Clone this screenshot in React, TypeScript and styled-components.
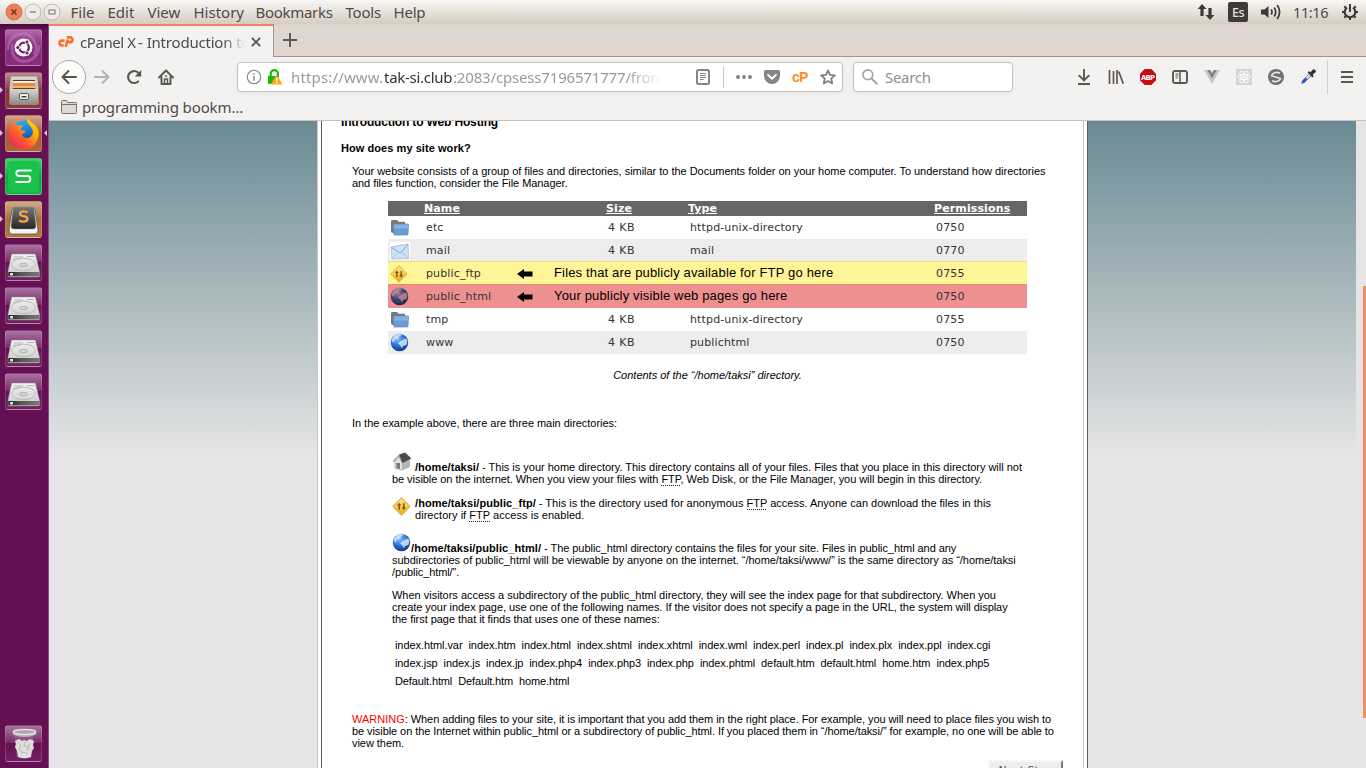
import React from "react";
import styled, { createGlobalStyle, css } from "styled-components";

const GlobalStyle = createGlobalStyle`
  *, *::before, *::after { box-sizing: border-box; }
  html, body { margin: 0; padding: 0; overflow: hidden; }
  svg { display: block; flex: none; }
`;

const uiFont = css`
  font-family: "Noto Sans", "Open Sans", sans-serif;
`;

const Desktop = styled.div`
  width: 1366px;
  height: 768px;
  display: flex;
  flex-direction: column;
  overflow: hidden;
  background: #fff;
`;

/* ---------- top panel ---------- */

const Panel = styled.header`
  ${uiFont}
  height: 24px;
  flex: none;
  display: flex;
  align-items: center;
  padding: 0 7px 0 4.5px;
  background: linear-gradient(#f9f8f6 0%, #f1eeea 20%, #d8cec4 95%, #d6ccc2 100%);
  color: #4c4b47;
`;

const WindowButtons = styled.div`
  display: flex;
  gap: 1px;
  width: 66px;
`;

const Menus = styled.nav`
  display: flex;
  gap: 12px;
`;

const Label = styled.span<{ $w: number; $ls?: number }>`
  display: block;
  width: ${(p) => p.$w}px;
  letter-spacing: ${(p) => p.$ls ?? 0}px;
  font-size: 15px;
  line-height: 20px;
  white-space: nowrap;
`;

const Indicators = styled.div`
  margin-left: auto;
  display: flex;
  align-items: center;
`;

const Layout = styled.div`
  width: 20px;
  height: 20px;
  margin: 0 13px 0 13px;
  border-radius: 2px;
  background: #3c3b37;
  color: #e6e1db;
  font-size: 12.5px;
  font-weight: 500;
  line-height: 21px;
  letter-spacing: -0.6px;
  text-align: center;
`;

const Clock = styled.div`
  width: 37px;
  margin: 0 11px 0 12px;
  font-size: 14.5px;
  line-height: 20px;
  letter-spacing: -0.4px;
  white-space: nowrap;
`;

/* ---------- launcher ---------- */

const Main = styled.div`
  flex: 1;
  min-height: 0;
  display: flex;
`;

const Launcher = styled.aside`
  width: 49px;
  flex: none;
  display: flex;
  flex-direction: column;
  gap: 6px;
  padding: 5px 0 6px 5px;
  border-right: 1px solid #8b4c85;
  background: linear-gradient(#44093c 0, #641052 6px, #641052 100%);
`;

const Tile = styled.div<{ $bg: string; $last?: boolean }>`
  position: relative;
  width: 37px;
  height: 37px;
  flex: none;
  display: flex;
  align-items: center;
  justify-content: center;
  border-radius: 3px;
  border: 1px solid rgba(255, 255, 255, 0.16);
  background: ${(p) => p.$bg};
  margin-top: ${(p) => (p.$last ? "auto" : "0")};
`;

const Pip = styled.i<{ $right?: boolean }>`
  position: absolute;
  top: 14px;
  ${(p) => (p.$right ? "right: -6px; border-right: 3px solid #d6c4d2;" : "left: -6px; border-left: 3px solid #d6c4d2;")}
  border-top: 3px solid transparent;
  border-bottom: 3px solid transparent;
`;

/* ---------- browser chrome ---------- */

const Browser = styled.main`
  flex: 1;
  min-width: 0;
  display: flex;
  flex-direction: column;
`;

const TabStrip = styled.div`
  ${uiFont}
  height: 33px;
  flex: none;
  display: flex;
  background: linear-gradient(#d6ccc2 0, #dfd6d0 1px);
`;

const Tab = styled.div`
  width: 225px;
  display: flex;
  align-items: center;
  padding: 0 0 0 9px;
  border-top: 2px solid #ee8560;
  border-right: 1px solid #a09790;
  background: #f4f2f1;
  color: #4c4b4a;
`;

const TabTitle = styled.div`
  display: flex;
  gap: 4px;
  width: 165px;
  margin: 0 6px 0 6px;
  overflow: hidden;
  font-size: 15px;
  line-height: 20px;
  letter-spacing: -0.2px;
  white-space: nowrap;
  mask-image: linear-gradient(to right, #000 143px, transparent 165px);
`;

const SiteName = styled.span`
  width: 54px;
  letter-spacing: -0.42px;
`;

const StripRest = styled.div`
  flex: 1;
  padding: 9px 0 0 9px;
  border-bottom: 1px solid #a0948d;
`;

const Toolbar = styled.div`
  ${uiFont}
  height: 40px;
  flex: none;
  display: flex;
  align-items: center;
  background: #f4f2f1;
`;

const RoundButton = styled.div`
  width: 34px;
  height: 34px;
  margin-left: 3px;
  display: grid;
  place-items: center;
  border: 1px solid #aaa8a6;
  border-radius: 50%;
  background: #fcfcfb;
`;

const ToolButton = styled.div`
  width: 32px;
  height: 32px;
  flex: none;
  display: grid;
  place-items: center;
`;

const NavIcons = styled.div`
  display: flex;
  width: 151px;
`;

const Field = styled.div<{ $w: number; $after?: number }>`
  width: ${(p) => p.$w}px;
  height: 30px;
  flex: none;
  display: flex;
  align-items: center;
  margin-right: ${(p) => p.$after ?? 0}px;
  padding-left: 8px;
  border: 1px solid #c5c2bf;
  border-radius: 4px;
  background: #fff;
  box-shadow: 0 1px 4px rgba(0, 0, 0, 0.06);
  font-size: 15px;
  color: #8f8f8f;
`;

const Identity = styled.div`
  display: flex;
  gap: 5px;
`;

const Address = styled.div`
  display: flex;
  width: 374px;
  margin: 0 31px 0 8px;
  overflow: hidden;
  color: #9a9a9a;
  white-space: nowrap;
  mask-image: linear-gradient(to right, #000 335px, transparent 371px);
`;

const Part = styled.span<{ $w: number; $ls: number; $strong?: boolean }>`
  width: ${(p) => p.$w}px;
  flex: none;
  letter-spacing: ${(p) => p.$ls}px;
  line-height: 20px;
  color: ${(p) => (p.$strong ? "#333" : "inherit")};
`;

const SearchHint = styled.span`
  margin-left: 7px;
  letter-spacing: -0.3px;
`;

const FieldRule = styled.div`
  width: 1px;
  height: 22px;
  margin: 0 12px 0 13px;
  background: #c9c9c9;
`;

const PageActions = styled.div`
  display: flex;
  align-items: center;
  gap: 12px;
`;

const Extensions = styled.div`
  display: flex;
  margin-left: auto;
  width: 298px;
  align-items: center;
`;

const ToolbarRule = styled.div`
  width: 1px;
  height: 34px;
  margin: 0 3px 0 3px;
  background: #d2d0ce;
`;

const BookmarksBar = styled.div`
  ${uiFont}
  height: 24px;
  flex: none;
  display: flex;
  align-items: center;
  gap: 5px;
  padding: 0 0 3px 12px;
  border-bottom: 1px solid #c5c2bf;
  background: #f4f2f1;
  color: #4c4b4a;
`;

/* ---------- page ---------- */

const Viewport = styled.section`
  flex: 1;
  min-height: 0;
  display: flex;
  overflow: hidden;
`;

const Backdrop = styled.div`
  flex: 1;
  display: flex;
  padding-left: 268px;
  background: linear-gradient(#6a8a93 0, #e5e5e5 335px);
`;

const ScrollTrack = styled.div`
  width: 10px;
  display: flex;
  justify-content: flex-end;
  padding-top: 165px;
  background: #e5e5e5;
`;

const ScrollThumb = styled.div`
  width: 3px;
  height: 432px;
  background: #f08b67;
`;

const OuterFrame = styled.div`
  width: 771px;
  padding: 0 3px;
  border-left: 1px solid #c8c8c8;
  border-right: 1px solid #5e5e5e;
  background: #fff;
`;

const Sheet = styled.div`
  display: flow-root;
  width: 763px;
  height: 100%;
  padding-left: 19px;
  border-left: 1px solid #5e5e5e;
  border-right: 1px solid #c8c8c8;
  font: 11px/12px "Liberation Sans", Arial, sans-serif;
  color: #000;
  white-space: nowrap;
`;

const Heading = styled.h2<{ $top: number; $size: number; $ls: number }>`
  margin: ${(p) => p.$top}px 0 0;
  font-size: ${(p) => p.$size}px;
  line-height: 12px;
  font-weight: bold;
  letter-spacing: ${(p) => p.$ls}px;
`;

const Copy = styled.p<{ $top: number; $indent?: number }>`
  margin: ${(p) => p.$top}px 0 0 ${(p) => p.$indent ?? 11}px;
`;

const Line = styled.span<{ $ls: number }>`
  letter-spacing: ${(p) => p.$ls}px;
`;

const Path = styled.b<{ $ls: number }>`
  letter-spacing: ${(p) => p.$ls}px;
`;

const Caption = styled.p`
  width: 639px;
  margin: 15px 0 0 47px;
  text-align: center;
  font-style: italic;
`;

const Abbr = styled.abbr`
  text-decoration: none;
  background: repeating-linear-gradient(to right, #222 0 1px, transparent 1px 2px) 0 100% / 100% 1px no-repeat;
  padding-bottom: 1px;
`;

const InlineIcon = styled.span<{ $gap: number }>`
  display: inline-block;
  margin: -20px ${(p) => p.$gap}px 0 0;
  vertical-align: baseline;
`;

const FtpRow = styled.div`
  display: flex;
  gap: 4px;
  margin: 12px 0 0 51px;
`;

const Listing = styled.div`
  width: 639px;
  margin: 12px 0 0 47px;
  font-family: "DejaVu Sans", sans-serif;
  font-size: 11px;
  color: #333;
`;

const ListingHead = styled.div`
  display: grid;
  grid-template-columns: 36px 182px 82px 246px 1fr;
  height: 15px;
  line-height: 15px;
  background: #666;
  color: #fff;
  font-weight: bold;
  text-decoration: underline;
  letter-spacing: 0.12px;
`;

const ListingRow = styled.div<{ $bg: string; $h: number; $edge?: string; $drop?: number }>`
  display: grid;
  grid-template-columns: 2px 36px 182px 82px 246px 1fr;
  align-items: center;
  height: ${(p) => p.$h}px;
  padding-top: ${(p) => p.$drop ?? 0}px;
  background: ${(p) => p.$bg};
  box-shadow: ${(p) => (p.$edge ? `inset 0 1px ${p.$edge}` : "none")};
  letter-spacing: 0.14px;
`;

const NoteRow = styled(ListingRow)`
  grid-template-columns: 2px 36px 91px 37px 382px 1fr;
`;

const Size = styled.span`
  letter-spacing: 0.4px;
`;

const Note = styled.span`
  margin-bottom: 2px;
  font: 13px/14px "Liberation Sans", Arial, sans-serif;
  letter-spacing: 0.16px;
  color: #000;
`;

const IndexNames = styled.div`
  margin: 11px 0 0 54px;
  line-height: 18px;
`;

const IndexRow = styled.div<{ $ls: number }>`
  display: flex;
  gap: 6px;
  letter-spacing: ${(p) => p.$ls}px;
`;

const Warn = styled.span`
  color: #f00;
`;

const NextButton = styled.button`
  display: block;
  width: 75px;
  margin: 11px 0 0 647px;
  padding: 3px 0;
  border: 2px solid;
  border-color: #f6f6f6 #7c7c7c #7c7c7c #f6f6f6;
  background: #ededed;
  font: 11px/12px "DejaVu Sans", sans-serif;
  color: #555;
`;

/* ---------- icons ---------- */

const WinButton = ({ kind }: { kind: "close" | "min" | "max" }) => (
  <svg width="18" height="18" viewBox="0 0 18 18" fill="none">
    <circle cx="9" cy="9" r="8" fill={kind === "close" ? "#ef7f56" : "#efebe6"} stroke={kind === "close" ? "#cf7452" : "#c3bab2"} />
    {kind === "close" && <path d="M6.5 6.5l5 5M11.5 6.5l-5 5" stroke="#5a3325" strokeWidth="1.4" />}
    {kind === "min" && <path d="M6 9h6" stroke="#77726c" strokeWidth="1.2" />}
    {kind === "max" && <rect x="6" y="7" width="6" height="4" stroke="#77726c" />}
  </svg>
);

const NetworkIcon = () => (
  <svg width="18" height="18" viewBox="0 0 18 18" fill="#3c3b37">
    <path d="M5 1l4.500 5H6.600v7H3.400V6H.800zM13 17l-4.500-5h2.900V5h3.200v7h2.800z" />
  </svg>
);

const SoundIcon = () => (
  <svg width="20" height="18" viewBox="0 0 20 18" fill="none" stroke="#3c3b37">
    <path d="M0 6.500h3.500L7.500 3v12l-4-3.500H0z" fill="#3c3b37" stroke="none" />
    <path d="M10.200 6.500q1.500 2.500 0 5M13.200 4.500q3 4.500 0 9M16.200 2q4.800 7 0 14" strokeWidth="1.700" />
  </svg>
);

const SessionIcon = () => (
  <svg width="18" height="18" viewBox="0 0 18 18" fill="none" stroke="#3c3b37">
    <path d="M6 4.600a5.300 5.300 0 1 0 6 0" strokeWidth="2.200" />
    <path d="M9 1v8" strokeWidth="2" />
    <path d="M3.500 9H1M17 9h-2.500M5.200 12.800L3.300 14.700M12.800 12.800l1.900 1.900M9 14.500V17M4.800 4.800L3.300 3.300M13.200 4.800l1.500-1.500" strokeWidth="2" />
  </svg>
);

const DashIcon = () => (
  <svg width="35" height="35" viewBox="0 0 35 35" fill="none">
    <path d="M2 20C1 8 13 1 22 5c8 4 10 14 6 20M33 15c1 10-8 18-18 16C8 29 4 22 7 14" stroke="#c58abd" strokeOpacity=".45" strokeWidth="3" />
    <circle cx="17.500" cy="17.500" r="9" fill="#fff" />
    <circle cx="18" cy="17.500" r="4.800" stroke="#6d1f61" strokeWidth="2.300" />
    <path d="M18 17.500H9M18 17.500l4.500-8M18 17.500l4.500 8" stroke="#fff" strokeWidth="1.200" />
    <circle cx="18" cy="17.500" r="3.200" fill="#fff" />
    <g fill="#6d1f61" stroke="#fff" strokeWidth=".8"><circle cx="11.800" cy="17.500" r="2" /><circle cx="21" cy="12" r="2" /><circle cx="21" cy="23" r="2" /></g>
  </svg>
);

const FilesIcon = () => (
  <svg width="30" height="31" viewBox="0 0 30 31">
    <defs><linearGradient id="cab" x2="0" y2="1"><stop stopColor="#d9d7d3" /><stop offset="1" stopColor="#8d8b88" /></linearGradient></defs>
    <path d="M2.500 2h25L29 12v17H1V12z" fill="url(#cab)" stroke="#e9e6e2" strokeWidth=".7" />
    <path d="M4 5h22v10H4z" fill="#5a3a2a" />
    <path d="M4 6h22v2H4z" fill="#f3ece2" /><path d="M4 8h22v5H4z" fill="#ea8a3c" /><path d="M3 11.500h24v1H3z" fill="#f7dcae" />
    <path d="M1 14h28v15H1z" fill="url(#cab)" />
    <rect x="10.500" y="18.500" width="9" height="6" rx="1" fill="#eee" stroke="#555" /><path d="M12.500 21h5v1.500h-5z" fill="#444" />
  </svg>
);

const FirefoxIcon = () => (
  <svg width="32" height="32" viewBox="0 0 32 32">
    <defs>
      <linearGradient id="fox" x1="1" x2=".1" y2="1"><stop stopColor="#ffe600" /><stop offset=".35" stopColor="#ffb010" /><stop offset=".65" stopColor="#ff5a2d" /><stop offset="1" stopColor="#e8186c" /></linearGradient>
      <linearGradient id="orb" x2=".3" y2="1"><stop stopColor="#1fc0ff" /><stop offset="1" stopColor="#1c3f9d" /></linearGradient>
    </defs>
    <circle cx="16.500" cy="15" r="12.500" fill="url(#orb)" />
    <path d="M3 8c1-2 2-3 3-4 0 2 .500 3 1.500 3.500C9 7 11 7 12 7.500c2-.500 3 0 3.500 0C13 9 12.500 11 13 12c2 1 4 0 4.500 1.500-.5 1.500-2.500 1.500-3.500 3 0 3 5 5 9 2 2-2 2.500-5 1-8C22.500 8 20 6 19 4c0-2 0-3 1-4 1 3 4 4 6 6 1.500 1.500 2 2 2.500 3C31 12 31.500 16 30 20c-2 7-7 11-14 11.500C8 31 2 26 1 18.500.500 14 1.500 10 3 8z" fill="url(#fox)" />
  </svg>
);

const WpsIcon = () => (
  <svg width="37" height="37" viewBox="0 0 37 37">
    <rect x="3" y="3" width="31" height="31" rx="4" fill="#18c24b" />
    <path d="M26.500 12.500H14c-3.500 0-3.500 5.500 0 5.500h8.500c3.800 0 3.800 6 0 6H10.500" fill="none" stroke="#fff" strokeWidth="1.900" />
  </svg>
);

const SublimeIcon = () => (
  <svg width="33" height="33" viewBox="0 0 33 33">
    <defs><linearGradient id="key" x2="0" y2="1"><stop stopColor="#777" /><stop offset="1" stopColor="#252525" /></linearGradient></defs>
    <path d="M5 6L2 27q0 4 3 4h23q3 0 3-4L28 6z" fill="#f4f4f4" stroke="#555" strokeWidth=".8" />
    <path d="M6 4h21l2 19q0 3-3 3H7q-3 0-3-3z" fill="url(#key)" stroke="#999" strokeWidth=".5" />
    <path d="M20.500 9.500c-3-2-7.500-1.300-7.500 1.300 0 3.700 7.500 1.200 7.500 5 0 3.200-5.500 3.500-8.500 1.700" fill="none" stroke="#f5a04a" strokeWidth="2.400" />
  </svg>
);

const DiskIcon = () => (
  <svg width="35" height="35" viewBox="0 0 35 35">
    <defs><linearGradient id="disk" x2="0" y2="1"><stop stopColor="#f2f2f2" /><stop offset="1" stopColor="#c9c9c9" /></linearGradient>
    <linearGradient id="diskedge"><stop stopColor="#222" /><stop offset=".4" stopColor="#555" /><stop offset="1" stopColor="#777" /></linearGradient></defs>
    <path d="M6.500 9h22q.700 0 1 .700L33.500 26v5q0 1-1 1H3q-1 0-1-1v-5L5.500 9.700Q5.800 9 6.500 9z" fill="url(#disk)" stroke="#8e8e8e" strokeWidth=".5" />
    <path d="M2.300 27h31v4.300H2.300z" fill="url(#diskedge)" /><path d="M4 28h3v2.500H4z" fill="#ddd" />
    <ellipse cx="17.500" cy="19.500" rx="12" ry="6.300" fill="none" stroke="#bdbdbd" /><ellipse cx="17.500" cy="20" rx="4" ry="1.600" fill="#d5d5d5" stroke="#a7a7a7" strokeWidth=".8" />
    <path d="M8 12h9M21 11.500h7M7 14.500l8-1" stroke="#b5b5b5" fill="none" />
  </svg>
);

const TrashIcon = () => (
  <svg width="35" height="35" viewBox="0 0 35 35">
    <path d="M8 8l2.500 23q7 3 14 0L28 8z" fill="#b9a4b6" fillOpacity=".22" />
    <path d="M9 15l4-2 3 2 2-1 3 1 3-2 4 2-1 4 1 3-2 3-1 6q-6 2.500-13 0l-1-6-2-4 1-3z" fill="#dededc" />
    <path d="M12 17l3 3-2 3 3 3M19 16l-1 4 4 1-1 4M24 17l-2 4 3 3M15 27l3-1 4 2" stroke="#bbbab8" fill="none" />
    <path d="M7 6.500v2q11.500 5 23 0v-2z" fill="#b9b9b4" />
    <ellipse cx="18.500" cy="6" rx="11.300" ry="2.500" fill="#b49eb0" stroke="#e0e0dc" strokeWidth="1.500" />
  </svg>
);

const CpLogo = () => (
  <svg width="16" height="11" viewBox="0 0 16 11" fill="none" stroke="#ff6c2c" strokeWidth="2.600">
    <path d="M6.700 4.600H4a2.400 2.400 0 0 0 0 4.900h1.700M7.700 11l1.900-7.500M8.800 1.400h3.400a2.300 2.300 0 0 1 0 4.700h-2" />
  </svg>
);

const CrossIcon = () => (
  <svg width="10" height="10" viewBox="0 0 10 10" stroke="#555" strokeWidth="1.700"><path d="M.800.800l8.400 8.400M9.200.800L.800 9.200" /></svg>
);

const PlusIcon = () => (
  <svg width="14" height="14" viewBox="0 0 14 14" stroke="#5b5855" strokeWidth="1.900"><path d="M7 0v14M0 7h14" /></svg>
);

const ArrowIcon = ({ back }: { back?: boolean }) => (
  <svg width="16" height="16" viewBox="0 0 16 16" fill="none" stroke={back ? "#55534f" : "#b5b3b1"} strokeWidth="2" strokeLinecap="round" strokeLinejoin="round">
    {back ? <path d="M15 8H1.500M7.500 2L1.500 8l6 6" /> : <path d="M1 8h13.500M8.500 2l6 6-6 6" />}
  </svg>
);

const ReloadIcon = () => (
  <svg width="16" height="16" viewBox="0 0 16 16" fill="none" stroke="#5a5855" strokeWidth="2.100">
    <path d="M12.800 11.800A6 6 0 1 1 12 3.500l1.500 1.800" /><path d="M15.200 1v6.500H8.800z" fill="#5a5855" stroke="none" />
  </svg>
);

const HomeIcon = () => (
  <svg width="16" height="16" viewBox="0 0 16 16" fill="none" stroke="#5a5855" strokeWidth="2" strokeLinejoin="round" strokeLinecap="round">
    <path d="M1 8.500L8 1.500l7 7M3.500 8v7h9V8" /><path d="M6.500 15v-5h3v5" strokeWidth="1.500" /><path d="M7.500 7h1" strokeWidth="1.500" />
  </svg>
);

const InfoIcon = () => (
  <svg width="16" height="16" viewBox="0 0 16 16" fill="none" stroke="#858585">
    <circle cx="8" cy="8" r="6.700" strokeWidth="1.100" /><path d="M8 7v4.700M8 4.200v1.600" strokeWidth="1.500" />
  </svg>
);

const LockIcon = () => (
  <svg width="16" height="16" viewBox="0 0 16 16">
    <path d="M3.700 8V4.800a3.600 3.600 0 0 1 7.200 0V8" fill="none" stroke="#12bc00" strokeWidth="2.200" />
    <path d="M1 7h9l-4 8H2q-1 0-1-1z" fill="#12bc00" />
    <path d="M9.500 6.300L14.800 15H4.500z" fill="#ffa61c" stroke="#ffa61c" strokeWidth="1" strokeLinejoin="round" /><path d="M9.700 9v3M9.700 13v1.300" stroke="#fff" strokeWidth="1.400" />
  </svg>
);

const ReaderIcon = () => (
  <svg width="14" height="16" viewBox="0 0 14 16" fill="none" stroke="#858585">
    <rect x="1" y="1" width="12" height="14" rx="1.500" strokeWidth="2" /><path d="M4 4.500h6M4 6.500h6M4 8.500h6M4 10.500h3.500" />
  </svg>
);

const DotsIcon = () => (
  <svg width="16" height="16" viewBox="0 0 16 16" fill="#858585"><circle cx="2" cy="8" r="2" /><circle cx="8" cy="8" r="2" /><circle cx="14" cy="8" r="2" /></svg>
);

const PocketIcon = () => (
  <svg width="16" height="16" viewBox="0 0 16 16" fill="none">
    <path d="M1.500 1h13Q16 1 16 2.500V7A8 8 0 0 1 0 7V2.500Q0 1 1.500 1z" fill="#858585" /><path d="M4.200 6L8 9.700 11.800 6" stroke="#fff" strokeWidth="2" strokeLinecap="round" strokeLinejoin="round" />
  </svg>
);

const CpAction = styled.span`
  width: 16px;
  font: bold 14px/16px "Liberation Sans", sans-serif;
  letter-spacing: -0.8px;
  color: #ff8d1e;
`;

const StarIcon = () => (
  <svg width="16" height="16" viewBox="0 0 16 16" fill="none" stroke="#7d7d7d" strokeWidth="1.700" strokeLinejoin="round">
    <path d="M8 1.300l2 4.500 4.900.500-3.700 3.300 1.100 4.900L8 12l-4.300 2.500 1.100-4.900L1.100 6.300 6 5.800z" />
  </svg>
);

const MagnifierIcon = () => (
  <svg width="16" height="16" viewBox="0 0 16 16" fill="none" stroke="#a4a4a4"><circle cx="5.800" cy="5.800" r="4.900" strokeWidth="1.700" /><path d="M9.500 9.500l5.800 5.800" strokeWidth="2" /></svg>
);

const DownloadIcon = () => (
  <svg width="16" height="16" viewBox="0 0 16 16" fill="none" stroke="#5a5855" strokeWidth="1.900"><path d="M8 0v11M2.700 6.200L8 11.500l5.300-5.300M2 15h12" /></svg>
);

const LibraryIcon = () => (
  <svg width="16" height="16" viewBox="0 0 16 16" fill="none" stroke="#5a5855" strokeWidth="1.800"><path d="M1.500 1v14M5.500 2v13M9 1v14M10.700 2.500l4.600 12.300" strokeWidth="1.700" /></svg>
);

const AbpIcon = () => (
  <svg width="18" height="18" viewBox="0 0 18 18">
    <path d="M5.700 1h6.600L17 5.700v6.600L12.300 17H5.700L1 12.300V5.700z" fill="#c70d12" />
    <text x="9" y="11.700" fill="#fff" textAnchor="middle" fontFamily="DejaVu Sans" fontWeight="bold" fontSize="6.800" textLength="14">ABP</text>
  </svg>
);

const SidebarIcon = () => (
  <svg width="16" height="16" viewBox="0 0 16 16" fill="none" stroke="#5a5855">
    <rect x="1" y="2" width="14" height="12" rx="2" strokeWidth="1.900" /><path d="M8 2v12" strokeWidth="1.500" /><path d="M3.500 5h3M3.500 7h3M3.500 9h2" />
  </svg>
);

const VueIcon = () => (
  <svg width="16" height="14" viewBox="0 0 16 14"><path d="M0 0h16L8 14z" fill="#c6c6c6" /><path d="M3.200 0h9.600L8 8.500z" fill="#858585" /><path d="M6.200 0h3.600L8 3z" fill="#e8e8e8" /></svg>
);

const ReactIcon = () => (
  <svg width="16" height="16" viewBox="0 0 16 16" fill="none">
    <path fill="#d5d5d5" d="M0 0h16v16H0z" />
    <g stroke="#fbfbfb" strokeWidth="1"><ellipse cx="8" cy="8" rx="6.500" ry="2.500" /><ellipse cx="8" cy="8" rx="6.500" ry="2.500" transform="rotate(60 8 8)" /><ellipse cx="8" cy="8" rx="6.500" ry="2.500" transform="rotate(120 8 8)" /></g>
    <circle cx="8" cy="8" r="1.300" fill="#fff" />
  </svg>
);

const BlockIcon = () => (
  <svg width="16" height="16" viewBox="0 0 16 16" fill="none"><circle cx="8" cy="8" r="8" fill="#707070" /><path d="M12 4.200c-2.500-1.500-6.500-1-8.300 1.800M4 11.800c2.500 1.500 6.500 1 8.300-1.800M2.800 6.500l10.500 3.300" stroke="#e8e8e8" strokeWidth="1.600" /></svg>
);

const DropperIcon = () => (
  <svg width="16" height="16" viewBox="0 0 16 16" fill="none">
    <path d="M9.500 4.500L3 11l-1.500 3.500L5 13l6.500-6.500z" fill="#ccd6ee" stroke="#777" strokeWidth=".8" /><path d="M6.500 9.500l-4 4" stroke="#2a55d8" strokeWidth="2.500" />
    <path d="M7.500 3.300l1.500-1 1.500 1L12.500.800Q14-.300 15.300 1q1.200 1.300 0 2.600l-2.500 2 .8 1.800-1.300 1.200z" fill="#353538" />
  </svg>
);

const BurgerIcon = () => (
  <svg width="12" height="12" viewBox="0 0 12 12" stroke="#5a5855" strokeWidth="1.800"><path d="M0 1h12M0 6h12M0 11h12" /></svg>
);

const BookmarkFolder = () => (
  <svg width="16" height="14" viewBox="0 0 16 14" fill="#dcdad8" stroke="#77736f">
    <path d="M.500 12.500v-11q0-1 1-1h4l1.500 2h7.500q1 0 1 1v9q0 1-1 1h-13q-1 0-1-1z" /><path d="M.500 4.500h15" />
  </svg>
);

const FolderIcon = () => (
  <svg width="20" height="18" viewBox="0 0 20 18">
    <path d="M1 2.500Q1 1 2 1h5l1.500 1.800H15V14H3q-2 0-2-2z" fill="#747a80" />
    <path d="M3.500 5h15l-.5 10.500-1 .500H4z" fill="#6b9bd0" stroke="#5b89be" strokeWidth=".7" /><path d="M4 5.500h14v4H4z" fill="#86b0de" />
  </svg>
);

const MailIcon = () => (
  <svg width="20" height="20" viewBox="0 0 20 20">
    <path d="M0 1h20v18H0z" fill="#fff" />
    <path d="M1 6l17-3 .500 14.500L2 18z" fill="#cfe3f5" stroke="#9dbbd9" strokeWidth=".8" /><path d="M1.500 6.500l9 5.500L18 3.500" fill="none" stroke="#7fa6cd" /><path d="M2 17.500l6-6.500M18 17l-6-6" fill="none" stroke="#a9c5e2" />
  </svg>
);

const FtpIcon = ({ size = 19 }: { size?: number }) => (
  <svg width={size} height={size} viewBox="0 0 18 18">
    <defs><linearGradient id="sign" x2="0" y2="1"><stop stopColor="#ffe98a" /><stop offset="1" stopColor="#e9ac10" /></linearGradient></defs>
    <path d="M9 .800L17.200 9 9 17.200.800 9z" fill="url(#sign)" stroke="#dfb040" strokeLinejoin="round" />
    <path d="M6.800 12V7M11.200 6v5" stroke="#7a5510" strokeWidth="1.400" /><path d="M4.800 8L6.800 5.500 8.800 8zM9.200 10l2 2.500 2-2.500z" fill="#7a5510" />
  </svg>
);

const GlobeIcon = ({ dim }: { dim?: boolean }) => {
  const id = dim ? "globeDim" : "globe";
  return (
    <svg width="19" height="19" viewBox="0 0 19 19">
      <defs><radialGradient id={id} cx=".4" cy=".3" r=".75"><stop stopColor={dim ? "#9a86a8" : "#8cc0ff"} /><stop offset=".5" stopColor={dim ? "#3f4370" : "#2f74d8"} /><stop offset="1" stopColor={dim ? "#1b1f45" : "#0d2f85"} /></radialGradient></defs>
      <circle cx="9.500" cy="9.500" r="8.700" fill={`url(#${id})`} />
      <path d="M2 6q2-4 6-5 3 0 4 1l-3 1.500-1 2-3 1-1 2-1 1.500q-1.500-1.500-1-4zM10 8.500l2-1 3-2 2 1q1 3-.5 5.500l-3.500 1-1 2.500-2-3.500-2-1.500z" fill={dim ? "#c78a98" : "#dcedfb"} fillOpacity=".8" />
    </svg>
  );
};

const HouseIcon = () => (
  <svg width="20" height="19" viewBox="0 0 20 19">
    <path d="M3 9l6-6 8 4v8l-7 3-7-1.500z" fill="#e3e3e3" stroke="#999" strokeWidth=".7" /><path d="M10 10v8l8-3.500V8z" fill="#b5b5b5" />
    <path d="M.500 9L7 2.500 10.500 10 10 11 6.500 5 1.500 10z" fill="#a8a8a8" /><path d="M7 2.500L13 .500 19.500 6.500 10.500 11z" fill="#4b4b4b" /><path d="M4.500 11h3.500v6L4.500 16z" fill="#777" />
  </svg>
);

const PointerArrow = () => (
  <svg width="16" height="12" viewBox="0 0 16 12"><path d="M0 6l7-5v2.500h8.500v5H7V11z" fill="#000" /></svg>
);

/* ---------- data ---------- */

const menus: [string, number, number][] = [
  ["File", 25, 0], ["Edit", 28, 0], ["View", 34, 0], ["History", 50, 0], ["Bookmarks", 78, -0.3], ["Tools", 36, -0.2], ["Help", 32, -0.2],
];

const indexNames: [string, number][] = [
  ["index.html.var index.htm index.html index.shtml index.xhtml index.wml index.perl index.pl index.plx index.ppl index.cgi", -0.07],
  ["index.jsp index.js index.jp index.php4 index.php3 index.php index.phtml default.htm default.html home.htm index.php5", -0.095],
  ["Default.html Default.htm home.html", -0.125],
];

const glass = "linear-gradient(#a9729f 0%, #7a2b6b 48%, #641052 50%, #712260 100%)";

type PlainRowProps = { icon: React.ReactNode; name: string; type: string; perm: string; bg: string; h: number; drop?: number };

const PlainRow = ({ icon, name, type, perm, bg, h, drop }: PlainRowProps) => (
  <ListingRow $bg={bg} $h={h} $drop={drop}>
    <span />{icon}<span>{name}</span><Size>4 KB</Size><span>{type}</span><span>{perm}</span>
  </ListingRow>
);

export default function App() {
  return (
    <Desktop>
      <GlobalStyle />
      <Panel>
        <WindowButtons><WinButton kind="close" /><WinButton kind="min" /><WinButton kind="max" /></WindowButtons>
        <Menus>{menus.map(([t, w, ls]) => <Label key={t} $w={w} $ls={ls}>{t}</Label>)}</Menus>
        <Indicators><NetworkIcon /><Layout>Es</Layout><SoundIcon /><Clock>11:16</Clock><SessionIcon /></Indicators>
      </Panel>
      <Main>
        <Launcher>
          <Tile $bg="linear-gradient(#b36cab, #83287a 50%, #8b2c80)"><DashIcon /></Tile>
          <Tile $bg="linear-gradient(#b78d92, #86353f 50%, #8c3a42)"><Pip /><FilesIcon /></Tile>
          <Tile $bg="linear-gradient(#cfa48c, #ad5a38 50%, #b0633e)"><Pip /><FirefoxIcon /><Pip $right /></Tile>
          <Tile $bg="linear-gradient(#4fc877, #15a743 50%, #19b04a)"><Pip /><WpsIcon /></Tile>
          <Tile $bg="linear-gradient(#cdaa87, #ab6f38 50%, #b5793f)"><Pip /><SublimeIcon /></Tile>
          {[0, 1, 2, 3].map((i) => <Tile key={i} $bg={glass}><DiskIcon /></Tile>)}
          <Tile $bg={glass} $last><TrashIcon /></Tile>
        </Launcher>
        <Browser>
          <TabStrip>
            <Tab>
              <CpLogo />
              <TabTitle><SiteName>cPanel X</SiteName><span>-</span><span>Introduction</span><span>to</span></TabTitle>
              <CrossIcon />
            </Tab>
            <StripRest><PlusIcon /></StripRest>
          </TabStrip>
          <Toolbar>
            <RoundButton><ArrowIcon back /></RoundButton>
            <NavIcons>
              <ToolButton><ArrowIcon /></ToolButton><ToolButton><ReloadIcon /></ToolButton><ToolButton><HomeIcon /></ToolButton>
            </NavIcons>
            <Field $w={606} $after={10}>
              <Identity><InfoIcon /><LockIcon /></Identity>
              <Address>
                <Part $w={93} $ls={0.15}>https://www.</Part>
                <Part $w={69} $ls={-0.28} $strong>tak-si.club</Part>
                <Part $w={220} $ls={-0.17}>:2083/cpsess7196571777/frontend</Part>
              </Address>
              <ReaderIcon /><FieldRule />
              <PageActions><DotsIcon /><PocketIcon /><CpAction>cP</CpAction><StarIcon /></PageActions>
            </Field>
            <Field $w={160}><MagnifierIcon /><SearchHint>Search</SearchHint></Field>
            <Extensions>
              <ToolButton><DownloadIcon /></ToolButton><ToolButton><LibraryIcon /></ToolButton><ToolButton><AbpIcon /></ToolButton>
              <ToolButton><SidebarIcon /></ToolButton><ToolButton><VueIcon /></ToolButton><ToolButton><ReactIcon /></ToolButton>
              <ToolButton><BlockIcon /></ToolButton><ToolButton><DropperIcon /></ToolButton>
              <ToolbarRule /><ToolButton><BurgerIcon /></ToolButton>
            </Extensions>
          </Toolbar>
          <BookmarksBar><BookmarkFolder /><Label $w={165} $ls={-0.12}>programming bookm…</Label></BookmarksBar>
          <Viewport>
            <Backdrop>
              <OuterFrame>
                <Sheet>
                  <Heading as="h1" $top={-5} $size={12} $ls={-0.15}>Introduction to Web Hosting</Heading>
                  <Heading $top={14} $size={11} $ls={0.06}>How does my site work?</Heading>
                  <Copy $top={11}>
                    <Line $ls={-0.025}>Your website consists of a group of files and directories, similar to the Documents folder on your home computer. To understand how directories</Line><br />
                    <Line $ls={-0.06}>and files function, consider the File Manager.</Line>
                  </Copy>
                  <Listing>
                    <ListingHead><span /><span>Name</span><span>Size</span><span>Type</span><span>Permissions</span></ListingHead>
                    <PlainRow icon={<FolderIcon />} name="etc" type="httpd-unix-directory" perm="0750" bg="#fff" h={23} />
                    <PlainRow icon={<MailIcon />} name="mail" type="mail" perm="0770" bg="#ededed" h={22} drop={1} />
                    <NoteRow $bg="#fff597" $h={23} $edge="#ecdf83" $drop={2}>
                      <span /><FtpIcon size={18} /><span>public_ftp</span><PointerArrow /><Note>Files that are publicly available for FTP go here</Note><span>0755</span>
                    </NoteRow>
                    <NoteRow $bg="#ee9090" $h={24} $edge="#e88a78" $drop={1}>
                      <span /><GlobeIcon dim /><span>public_html</span><PointerArrow /><Note>Your publicly visible web pages go here</Note><span>0750</span>
                    </NoteRow>
                    <PlainRow icon={<FolderIcon />} name="tmp" type="httpd-unix-directory" perm="0755" bg="#fff" h={23} />
                    <PlainRow icon={<GlobeIcon />} name="www" type="publichtml" perm="0750" bg="#ededed" h={23} />
                  </Listing>
                  <Caption>Contents of the “/home/taksi” directory.</Caption>
                  <Copy $top={36}><Line $ls={-0.04}>In the example above, there are three main directories:</Line></Copy>
                  <Copy $top={32} $indent={51}>
                    <InlineIcon $gap={3}><HouseIcon /></InlineIcon><Path $ls={0.04}>/home/taksi/</Path>
                    <Line $ls={-0.015}> - This is your home directory. This directory contains all of your files. Files that you place in this directory will not</Line><br />
                    <Line $ls={-0.057}>be visible on the internet. When you view your files with <Abbr>FTP</Abbr>, Web Disk, or the File Manager, you will begin in this directory.</Line>
                  </Copy>
                  <FtpRow>
                    <FtpIcon />
                    <div>
                      <Path $ls={0.07}>/home/taksi/public_ftp/</Path>
                      <span> - This is the directory used for anonymous <Abbr>FTP</Abbr> access. Anyone can download the files in this</span><br />
                      <Line $ls={0.04}>directory if <Abbr>FTP</Abbr> access is enabled.</Line>
                    </div>
                  </FtpRow>
                  <Copy $top={21} $indent={51}>
                    <InlineIcon $gap={0}><GlobeIcon /></InlineIcon><Path $ls={0.07}>/home/taksi/public_html/</Path>
                    <Line $ls={-0.05}> - The public_html directory contains the files for your site. Files in public_html and any</Line><br />
                    <Line $ls={-0.032}>subdirectories of public_html will be viewable by anyone on the internet. “/home/taksi/www/” is the same directory as “/home/taksi</Line><br />
                    <Line $ls={-0.09}>/public_html/”.</Line>
                  </Copy>
                  <Copy $top={11} $indent={51}>
                    <Line $ls={-0.012}>When visitors access a subdirectory of the public_html directory, they will see the index page for that subdirectory. When you</Line><br />
                    <Line $ls={-0.043}>create your index page, use one of the following names. If the visitor does not specify a page in the URL, the system will display</Line><br />
                    <Line $ls={-0.045}>the first page that it finds that uses one of these names:</Line>
                  </Copy>
                  <IndexNames>
                    {indexNames.map(([row, ls]) => <IndexRow key={row} $ls={ls}>{row.split(" ").map((n) => <span key={n}>{n}</span>)}</IndexRow>)}
                  </IndexNames>
                  <Copy $top={23}>
                    <Warn>WARNING</Warn>
                    <Line $ls={-0.069}>: When adding files to your site, it is important that you add them in the right place. For example, you will need to place files you wish to</Line><br />
                    <Line $ls={-0.073}>be visible on the Internet within public_html or a subdirectory of public_html. If you placed them in “/home/taksi/” for example, no one will be able to</Line><br />
                    <Line $ls={-0.05}>view them.</Line>
                  </Copy>
                  <NextButton>Next Step</NextButton>
                </Sheet>
              </OuterFrame>
            </Backdrop>
            <ScrollTrack><ScrollThumb /></ScrollTrack>
          </Viewport>
        </Browser>
      </Main>
    </Desktop>
  );
}
